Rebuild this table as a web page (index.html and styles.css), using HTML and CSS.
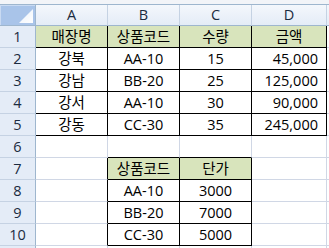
FILE: index.html
```html
<!DOCTYPE html>
<html lang="ko">
<head>
<meta charset="utf-8">
<title>Sheet</title>
<link rel="stylesheet" href="styles.css">
</head>
<body>
<div class="sheet">
  <div class="strip s0"></div><div class="strip"></div><div class="strip"></div><div class="strip"></div><div class="strip"></div><div class="strip"></div>

  <div class="corner"><svg width="14" height="14" viewBox="0 0 14 14"><defs><linearGradient id="tg" x1="0" y1="0" x2="1" y2="1"><stop offset="0" stop-color="#e9f0fa"/><stop offset="1" stop-color="#ffffff"/></linearGradient></defs><polygon points="14,0 14,14 0,14" fill="url(#tg)"/></svg></div>
  <div class="ch">A</div><div class="ch">B</div><div class="ch">C</div><div class="ch">D</div><div class="ch last"></div>

  <div class="rh">1</div>
  <div class="c g k">매장명</div><div class="c g k">상품코드</div><div class="c g k">수량</div><div class="c g k">금액</div><div class="c e"></div>

  <div class="rh">2</div>
  <div class="c k">강북</div><div class="c k">AA-10</div><div class="c k">15</div><div class="c k n">45,000</div><div class="c e"></div>

  <div class="rh">3</div>
  <div class="c k">강남</div><div class="c k">BB-20</div><div class="c k">25</div><div class="c k n">125,000</div><div class="c e"></div>

  <div class="rh">4</div>
  <div class="c k">강서</div><div class="c k">AA-10</div><div class="c k">30</div><div class="c k n">90,000</div><div class="c e"></div>

  <div class="rh">5</div>
  <div class="c k">강동</div><div class="c k">CC-30</div><div class="c k">35</div><div class="c k n">245,000</div><div class="c e"></div>

  <div class="rh">6</div>
  <div class="c"></div><div class="c kb"></div><div class="c kb"></div><div class="c"></div><div class="c e"></div>

  <div class="rh">7</div>
  <div class="c kr"></div><div class="c g k">상품코드</div><div class="c g k">단가</div><div class="c"></div><div class="c e"></div>

  <div class="rh">8</div>
  <div class="c kr"></div><div class="c k">AA-10</div><div class="c k">3000</div><div class="c"></div><div class="c e"></div>

  <div class="rh">9</div>
  <div class="c kr"></div><div class="c k">BB-20</div><div class="c k">7000</div><div class="c"></div><div class="c e"></div>

  <div class="rh">10</div>
  <div class="c kr"></div><div class="c k">CC-30</div><div class="c k">5000</div><div class="c"></div><div class="c e"></div>

  <div class="rh tail"></div><div class="c tail"></div><div class="c tail"></div><div class="c tail"></div><div class="c tail"></div><div class="c e tail"></div>
</div>
</body>
</html>
```
FILE: styles.css
```css
html, body {
  margin: 0;
  padding: 0;
  background: #ffffff;
}

.sheet {
  width: 329px;
  height: 248px;
  overflow: hidden;
  display: grid;
  grid-template-columns: 36px 72px 72px 72px 75px 2px;
  grid-template-rows: 5px 21px repeat(10, 22px) 2px;
  font-family: "Open Sans", "Noto Sans CJK KR", sans-serif;
  font-size: 14.5px;
  color: #000000;
}

.sheet > div {
  box-sizing: border-box;
  display: flex;
  align-items: center;
  justify-content: center;
  white-space: nowrap;
  line-height: 1;
}

.strip {
  background: #f2f4f8;
  border-bottom: 1px solid #9eb6ce;
}

.corner {
  background: #a9c4e9;
  border-right: 1px solid #9eb6ce;
  border-bottom: 1px solid #9eb6ce;
  box-shadow: inset 1px 1px 0 #c9daf2;
  justify-content: flex-end !important;
  align-items: flex-end !important;
  padding: 0 2px 2px 0;
}

.corner svg {
  display: block;
}

.ch {
  background: linear-gradient(#f4f7fc, #e4ecf7);
  border-right: 1px solid #c5d2e3;
  border-bottom: 1px solid #9eb6ce;
  color: #1b2b40;
  padding-top: 1px;
}

.ch.last {
  border-right: none;
}

.rh {
  background: #e4ecf7;
  border-right: 1px solid #9eb6ce;
  border-bottom: 1px solid #c5d2e3;
  color: #1b2b40;
  padding-top: 2px;
}

.c {
  border-right: 1px solid #d0d7e5;
  border-bottom: 1px solid #d0d7e5;
  padding-top: 2px;
}

.c.e {
  border-right: none;
}

.g {
  background: #d8e4bc;
}

.k {
  border-right-color: #000000;
  border-bottom-color: #000000;
}

.kb {
  border-bottom-color: #000000;
}

.kr {
  border-right-color: #000000;
}

.n {
  justify-content: flex-end !important;
  padding-right: 8px;
}

.tail {
  border-bottom: none;
}
```
